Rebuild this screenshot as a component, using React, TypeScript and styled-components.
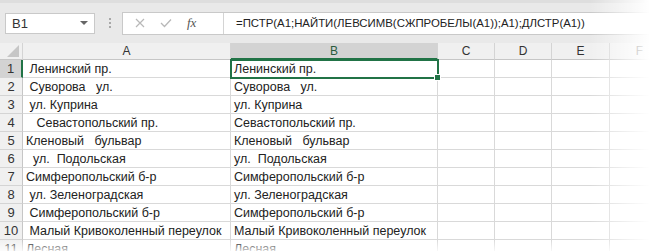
import styled, { createGlobalStyle } from "styled-components";

const GlobalStyle = createGlobalStyle`
    body {
        margin: 0;
        background: #ffffff;
        font-family: "Liberation Sans", Arial, sans-serif;
    }
`;

const Frame = styled.div`
    position: relative;
    width: 650px;
    height: 251px;
    overflow: hidden;
    background: #ffffff;
`;

const FormulaBar = styled.div`
    display: flex;
    align-items: center;
    height: 43px;
    padding: 0 0 0 5px;
    background: #e9e9e9;
    border-top: 3px solid #dedede;
    box-sizing: border-box;
`;

const NameBox = styled.div`
    display: flex;
    align-items: center;
    justify-content: space-between;
    width: 90px;
    height: 21px;
    padding: 0 6px 0 6px;
    box-sizing: border-box;
    background: #ffffff;
    border: 1px solid #c9c9c9;
    font-size: 13px;
    color: #333333;
`;

const Caret = styled.span`
    width: 0;
    height: 0;
    border-left: 4px solid transparent;
    border-right: 4px solid transparent;
    border-top: 4px solid #666666;
`;

const Grip = styled.div`
    display: flex;
    flex-direction: column;
    gap: 2px;
    margin: 0 11px 0 14px;
    span {
        width: 2px;
        height: 2px;
        background: #a8a8a8;
    }
`;

const InputBox = styled.div`
    display: flex;
    align-items: stretch;
    flex: 1;
    height: 21px;
    background: #ffffff;
    border: 1px solid #c9c9c9;
    border-right: none;
`;

const Buttons = styled.div`
    display: flex;
    align-items: center;
    gap: 15px;
    width: 101px;
    padding-left: 12px;
    box-sizing: border-box;
    border-right: 1px solid #d4d4d4;
`;

const Fx = styled.span`
    font-family: "Liberation Serif", serif;
    font-style: italic;
    font-size: 13px;
    color: #555555;
`;

const Formula = styled.div`
    display: flex;
    align-items: center;
    padding-left: 12px;
    font-size: 11.4px;
    color: #222222;
    white-space: nowrap;
`;

const Sheet = styled.div`
    display: grid;
    grid-template-columns: 23px 208px 207px 57px 57px 58px 60px;
    grid-auto-rows: 18px;
    grid-template-rows: 17px;
`;

const Corner = styled.div`
    position: relative;
    background: #f0f0f0;
    border-right: 1px solid #d4d4d4;
    border-bottom: 1px solid #c6c6c6;
    &::after {
        content: "";
        position: absolute;
        right: 3px;
        bottom: 2px;
        border-left: 12px solid transparent;
        border-bottom: 12px solid #c6c6c6;
    }
`;

const ColHead = styled.div<{ $active?: boolean }>`
    display: flex;
    align-items: center;
    justify-content: center;
    font-size: 12px;
    color: ${(p) => (p.$active ? "#2a5c3d" : "#333333")};
    background: ${(p) => (p.$active ? "#d3d3d3" : "#f0f0f0")};
    border-right: 1px solid #d4d4d4;
    border-bottom: ${(p) => (p.$active ? "2px solid #217346" : "1px solid #c6c6c6")};
    box-sizing: border-box;
`;

const RowHead = styled.div<{ $active?: boolean }>`
    display: flex;
    align-items: center;
    justify-content: center;
    font-size: 13px;
    color: #333333;
    background: ${(p) => (p.$active ? "#d3d3d3" : "#f0f0f0")};
    border-right: ${(p) => (p.$active ? "2px solid #217346" : "1px solid #c6c6c6")};
    border-bottom: 1px solid #d4d4d4;
    box-sizing: border-box;
`;

const Cell = styled.div<{ $selected?: boolean }>`
    position: relative;
    display: flex;
    align-items: center;
    padding-left: 3px;
    font-size: 12.5px;
    color: #222222;
    white-space: pre;
    overflow: visible;
    border-right: 1px solid #d9d9d9;
    border-bottom: 1px solid #d9d9d9;
    box-sizing: border-box;
    ${(p) =>
        p.$selected &&
        `
        outline: 2px solid #217346;
        outline-offset: -1px;
        z-index: 1;
        &::after {
            content: "";
            position: absolute;
            right: -4px;
            bottom: -4px;
            width: 5px;
            height: 5px;
            background: #217346;
            border: 1px solid #ffffff;
        }
    `}
`;

const Fade = styled.div`
    position: absolute;
    inset: 0;
    pointer-events: none;
    background:
        linear-gradient(to right, rgba(255, 255, 255, 0) 590px, #ffffff 650px),
        linear-gradient(to bottom, rgba(255, 255, 255, 0) 240px, rgba(255, 255, 255, 0.8) 251px);
`;

const columns = ["A", "B", "C", "D", "E", "F"];

const raw = [
    " Ленинский пр.",
    " Суворова   ул.",
    " ул. Куприна",
    "   Севастопольский пр.",
    "Кленовый   бульвар",
    "  ул.  Подольская",
    "Симферопольский б-р",
    " ул. Зеленоградская",
    " Симферопольский б-р",
    " Малый Кривоколенный переулок",
    "Лесная",
];

const App = () => {
    return (
        <Frame>
            <GlobalStyle />
            <FormulaBar>
                <NameBox>
                    B1
                    <Caret />
                </NameBox>
                <Grip>
                    <span />
                    <span />
                    <span />
                </Grip>
                <InputBox>
                    <Buttons>
                        <svg width="10" height="10" viewBox="0 0 10 10">
                            <path d="M1 1 L9 9 M9 1 L1 9" stroke="#b8b8b8" strokeWidth="1.2" />
                        </svg>
                        <svg width="12" height="10" viewBox="0 0 12 10">
                            <path d="M1 5 L4.5 8.5 L11 1.5" stroke="#b8b8b8" strokeWidth="1.3" fill="none" />
                        </svg>
                        <Fx>fx</Fx>
                    </Buttons>
                    <Formula>=ПСТР(A1;НАЙТИ(ЛЕВСИМВ(СЖПРОБЕЛЫ(A1));A1);ДЛСТР(A1))</Formula>
                </InputBox>
            </FormulaBar>
            <Sheet>
                <Corner />
                {columns.map((c) => (
                    <ColHead key={c} $active={c === "B"}>
                        {c}
                    </ColHead>
                ))}
                {raw.map((text, i) => (
                    <>
                        <RowHead key={`h${i}`} $active={i === 0}>
                            {i + 1}
                        </RowHead>
                        <Cell key={`a${i}`}>{text}</Cell>
                        <Cell key={`b${i}`} $selected={i === 0}>
                            {text.trim()}
                        </Cell>
                        <Cell key={`c${i}`} />
                        <Cell key={`d${i}`} />
                        <Cell key={`e${i}`} />
                        <Cell key={`f${i}`} />
                    </>
                ))}
            </Sheet>
            <Fade />
        </Frame>
    );
};

export default App;
